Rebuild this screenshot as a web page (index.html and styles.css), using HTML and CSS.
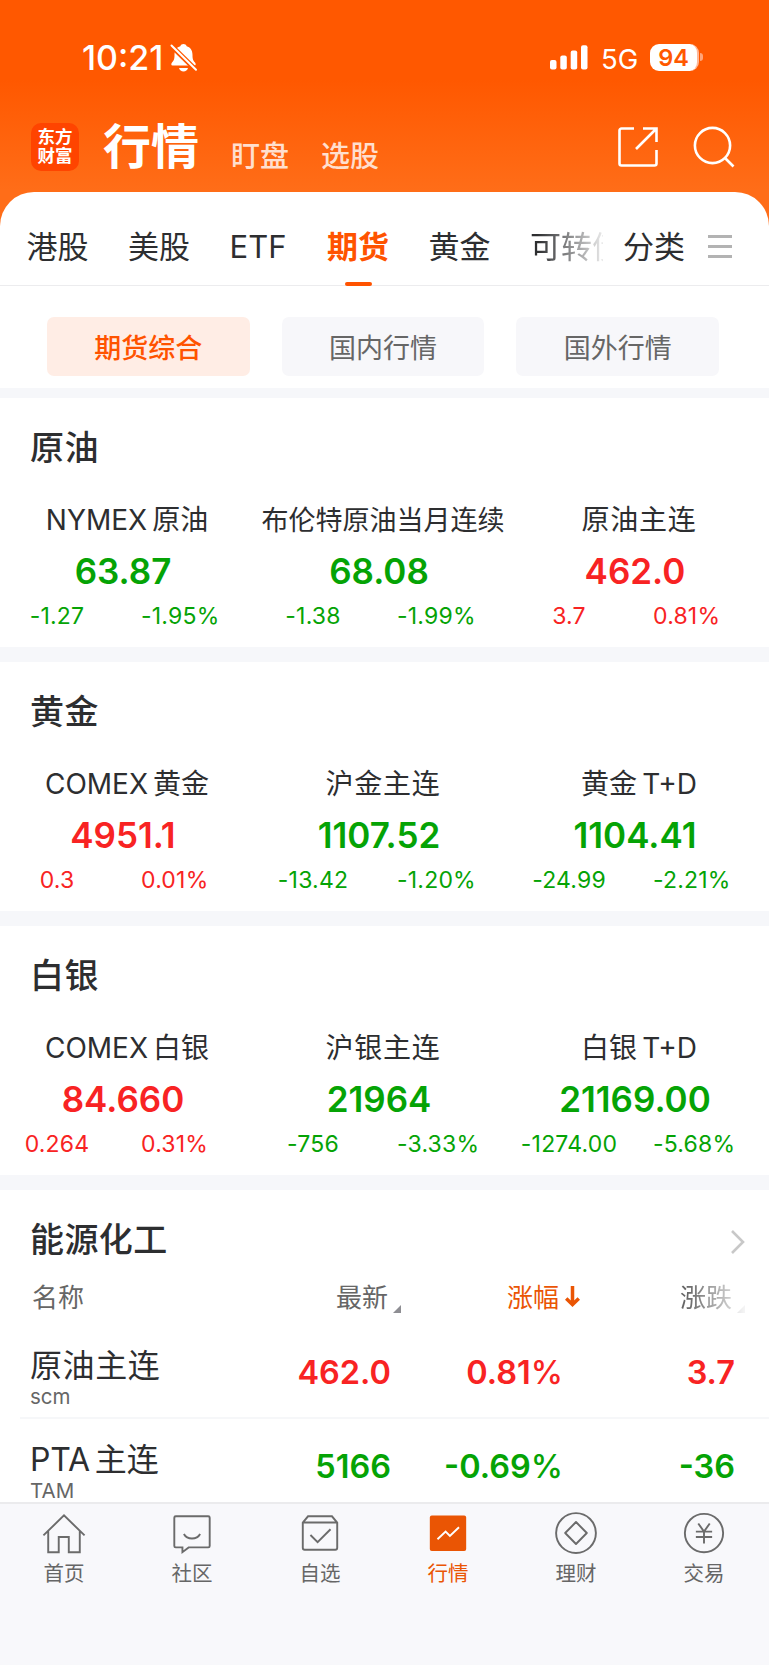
FILE: index.html
```html
<!DOCTYPE html>
<html lang="zh-CN">

<head>
  <meta charset="utf-8" />
  <meta name="viewport" content="width=device-width, initial-scale=1.0" />
  <title>行情</title>
  <link rel="stylesheet" href="styles.css">
</head>

<body>
  <header class="header">
    <div class="status-bar">
      <span class="time">10:21</span>
      <svg class="bell" width="28" height="30" viewBox="0 0 28 30">
        <path fill="#fff" d="M2.500 22.500C1 22.500 1 20.500 2 19.500C4 17.500 4.500 16 4.500 12C4.500 7 7 4.300 10.300 3.300C10.800 1.800 12 1 13.500 1S16.200 1.800 16.700 3.300C20 4.300 22.500 7 22.500 12C22.500 16 23 17.500 25 19.500C26 20.500 26 22.500 24.500 22.500Z" />
        <path fill="#fff" d="M9 25h9c-.6 2.200-2.300 3.600-4.500 3.600S9.600 27.200 9 25Z" />
        <path stroke="#ff5800" stroke-width="5" d="M0 1.500L27 28" />
        <path stroke="#fff" stroke-width="2" stroke-linecap="round" d="M1.500 2.500L26 26.800" />
      </svg>
      <svg class="signal" width="38" height="25" viewBox="0 0 38 25" fill="#fff">
        <rect x="0" y="15" width="6.500" height="9.500" rx="2" />
        <rect x="10.300" y="10.500" width="6.500" height="14" rx="2" />
        <rect x="20.700" y="5.500" width="6.500" height="19" rx="2" />
        <rect x="31" y="0.300" width="6.500" height="24.200" rx="2" />
      </svg>
      <span class="network">5G</span>
      <span class="battery">94</span>
      <span class="battery-cap"></span>
    </div>
    <div class="nav">
      <div class="logo">东方<br>财富</div>
      <h1>行情</h1>
      <span class="nav-link">盯盘</span>
      <span class="nav-link">选股</span>
      <svg class="share" width="42" height="42" viewBox="0 0 42 42" fill="none" stroke="#fff" stroke-width="2.600">
        <path d="M17 2.500H4.500a2 2 0 0 0-2 2V37.500a2 2 0 0 0 2 2H37.500a2 2 0 0 0 2-2V24M26 2.500H39.500V16M39 3L19 23" />
      </svg>
      <svg class="search" width="42" height="42" viewBox="0 0 42 42" fill="none" stroke="#fff" stroke-width="2.600">
        <circle cx="19.500" cy="19.500" r="17.600" />
        <path d="M32 32L40.500 40.500" />
      </svg>
    </div>
  </header>

  <main class="panel">
    <nav class="tabs">
      <span>港股</span>
      <span>美股</span>
      <span class="latin">ETF</span>
      <span class="active">期货</span>
      <span>黄金</span>
      <span class="fade">可转债</span>
      <span class="category">分类</span>
      <i class="menu"></i>
    </nav>

    <div class="pills">
      <span class="pill active">期货综合</span>
      <span class="pill">国内行情</span>
      <span class="pill">国外行情</span>
    </div>

    <section class="group">
      <h2>原油</h2>
      <div class="quotes">
        <div class="quote down">
          <h3 class="mixed">NYMEX<b>原油</b></h3>
          <strong>63.87</strong>
          <p><span>-1.27</span><span>-1.95%</span></p>
        </div>
        <div class="quote down">
          <h3 class="long">布伦特原油当月连续</h3>
          <strong>68.08</strong>
          <p><span>-1.38</span><span>-1.99%</span></p>
        </div>
        <div class="quote up">
          <h3>原油主连</h3>
          <strong>462.0</strong>
          <p><span>3.7</span><span>0.81%</span></p>
        </div>
      </div>
    </section>

    <section class="group">
      <h2>黄金</h2>
      <div class="quotes">
        <div class="quote up">
          <h3 class="mixed">COMEX<b>黄金</b></h3>
          <strong>4951.1</strong>
          <p><span>0.3</span><span>0.01%</span></p>
        </div>
        <div class="quote down">
          <h3>沪金主连</h3>
          <strong>1107.52</strong>
          <p><span>-13.42</span><span>-1.20%</span></p>
        </div>
        <div class="quote down">
          <h3 class="mixed">黄金<b>T+D</b></h3>
          <strong>1104.41</strong>
          <p><span>-24.99</span><span>-2.21%</span></p>
        </div>
      </div>
    </section>

    <section class="group">
      <h2>白银</h2>
      <div class="quotes">
        <div class="quote up">
          <h3 class="mixed">COMEX<b>白银</b></h3>
          <strong>84.660</strong>
          <p><span>0.264</span><span>0.31%</span></p>
        </div>
        <div class="quote down">
          <h3>沪银主连</h3>
          <strong>21964</strong>
          <p><span>-756</span><span>-3.33%</span></p>
        </div>
        <div class="quote down">
          <h3 class="mixed">白银<b>T+D</b></h3>
          <strong>21169.00</strong>
          <p><span>-1274.00</span><span>-5.68%</span></p>
        </div>
      </div>
    </section>

    <section class="list">
      <div class="list-title">
        <h2>能源化工</h2>
        <svg width="16" height="26" viewBox="0 0 16 26" fill="none" stroke="#c8c8c8" stroke-width="2.600">
          <path d="M2 2L13 13L2 24" />
        </svg>
      </div>
      <div class="row head">
        <span>名称</span>
        <span>最新<i class="sort"></i></span>
        <span class="sorted">涨幅<svg width="15" height="22" viewBox="0 0 15 22" fill="none" stroke="#ea5504" stroke-width="3.500"><path d="M7.500 0V19M1.200 12.500L7.500 18.500L13.800 12.500" /></svg></span>
        <span class="fade">涨跌<i class="sort"></i></span>
      </div>
      <div class="row up">
        <div class="name">原油主连<small>scm</small></div>
        <span>462.0</span>
        <span>0.81<em>%</em></span>
        <span>3.7</span>
      </div>
      <div class="row down">
        <div class="name"><div class="mixed">PTA<b>主连</b></div><small>TAM</small></div>
        <span>5166</span>
        <span>-0.69<em>%</em></span>
        <span>-36</span>
      </div>
    </section>
  </main>

  <footer class="tab-bar">
    <a>
      <svg width="46" height="46" viewBox="0 0 46 46">
        <path d="M1.500 24.500L23 3.500L44.500 24.500M6.500 20V42H17.500V26.200H28V42H39.500V20" />
      </svg>
      首页
    </a>
    <a>
      <svg width="46" height="46" viewBox="0 0 46 46">
        <path d="M6 4.500H40a1.500 1.500 0 0 1 1.500 1.500V35.500a1.500 1.500 0 0 1-1.500 1.500H19.500L13 42V37H6a1.500 1.500 0 0 1-1.500-1.500V6A1.500 1.500 0 0 1 6 4.500ZM14.500 23C18 29.300 28 29.300 31.500 23" />
      </svg>
      社区
    </a>
    <a>
      <svg width="46" height="46" viewBox="0 0 46 46">
        <path d="M10.500 4.500H35.500L41 11V37.500a2 2 0 0 1-2 2H7a2 2 0 0 1-2-2V11ZM5 11H41M13 24L20.500 31.500L34 18" />
      </svg>
      自选
    </a>
    <a class="active">
      <svg width="46" height="46" viewBox="0 0 46 46">
        <rect x="4" y="3.700" width="38" height="37" rx="2" fill="#ea5504" stroke="none" />
        <path stroke="#fff" d="M12 28.500L20.500 20.500L25 25L34.500 16" />
      </svg>
      行情
    </a>
    <a>
      <svg width="46" height="46" viewBox="0 0 46 46">
        <circle cx="23" cy="22" r="20.800" />
        <path d="M23 10.500L34.300 22L23 33.500L11.700 22Z" stroke-linejoin="round" />
      </svg>
      理财
    </a>
    <a>
      <svg width="46" height="46" viewBox="0 0 46 46">
        <circle cx="23" cy="22" r="20" />
        <path d="M17 12L23 20.500L29 12M14.500 20.500H31.500M14.500 26.200H31.500M23 20.500V33" />
      </svg>
      交易
    </a>
  </footer>
</body>

</html>
```
FILE: styles.css
```css
* {
  box-sizing: border-box;
}

body {
  margin: 0;
  width: 769px;
  height: 1665px;
  overflow: hidden;
  display: flex;
  flex-direction: column;
  background: #fff;
  color: #2d2e30;
  font-family: Inter, 'Noto Sans CJK SC', sans-serif;
  text-autospace: no-autospace;
}

h1,
h2,
h3,
p {
  margin: 0;
}

/* header */
.header {
  height: 232px;
  margin-bottom: -40px;
  flex: none;
  color: #fff;
  background: linear-gradient(#ff5800 80px, #ff6d18 190px);
}

.status-bar {
  height: 114px;
  padding: 0 66px 0 82px;
  display: flex;
  align-items: center;
}

.time {
  width: 88px;
  padding-top: 1px;
  font-size: 34px;
  font-weight: 500;
  letter-spacing: 0;
}

.bell {
  margin-top: 2px;
}

.signal {
  margin-left: auto;
  margin-right: 13px;
}

.network {
  width: 49px;
  margin-top: 3px;
  font-size: 27.5px;
}

.battery {
  width: 49px;
  height: 27px;
  border-radius: 9px;
  border-right: 2px solid #ffb899;
  background: #fff;
  color: #ff5800;
  font-size: 23.5px;
  font-weight: 600;
  line-height: 27px;
  text-align: center;
}

.battery-cap {
  width: 3px;
  height: 8px;
  margin-left: 1px;
  border-radius: 0 4px 4px 0;
  background: #ffa57a;
}

.nav {
  height: 66px;
  padding: 0 34px 0 31px;
  display: flex;
  align-items: center;
}

.logo {
  width: 48px;
  height: 48px;
  border-radius: 10px;
  background: #ff4400;
  font-size: 17.5px;
  font-weight: 700;
  line-height: 19px;
  padding-top: 4px;
  text-align: center;
}

.nav h1 {
  width: 128px;
  margin-left: 24px;
  font-size: 48px;
  font-weight: 700;
  line-height: 66px;
}

.nav-link {
  width: 90px;
  padding-top: 20px;
  font-size: 29px;
  font-weight: 500;
  line-height: 40px;
  color: #ffdfce;
}

.share {
  margin-left: auto;
  margin-right: 34px;
}

/* panel */
.panel {
  flex: 1;
  min-height: 0;
  overflow: hidden;
  border-radius: 34px 34px 0 0;
  background: #fff;
}

.tabs {
  height: 94px;
  padding: 16px 34px 0 26.5px;
  display: flex;
  align-items: center;
  border-bottom: 1px solid #ececee;
  font-size: 31px;
  line-height: 78px;
}

.tabs span {
  width: 62px;
  height: 78px;
  margin-right: 39.5px;
  white-space: nowrap;
}

.tabs .latin {
  width: 58px;
  font-size: 31px;
}

.tabs .active {
  color: #ff5300;
  font-weight: 700;
  display: flex;
  flex-direction: column;
  align-items: center;
}

.tabs .active::after {
  content: '';
  width: 27px;
  height: 4px;
  margin-top: -4px;
  flex: none;
  border-radius: 2px;
  background: #ff5300;
}

.tabs .fade {
  width: 73px;
  margin-right: 20px;
  overflow: hidden;
  -webkit-mask-image: linear-gradient(90deg, #000 10%, transparent 110%);
  mask-image: linear-gradient(90deg, #000 10%, transparent 110%);
}

.tabs .category {
  margin-right: 23px;
}

.menu {
  width: 24px;
  height: 23px;
  border: solid #b3b3b3;
  border-width: 3px 0;
  background: linear-gradient(#b3b3b3, #b3b3b3) center / 24px 3px no-repeat;
}

.pills {
  height: 112px;
  padding: 31px 50px 12px 47px;
  display: flex;
  gap: 32px;
  border-bottom: 10px solid #f6f7fa;
}

.pill {
  flex: 1;
  height: 59px;
  border-radius: 7px;
  background: #f7f7fa;
  color: #666;
  font-size: 27px;
  line-height: 63px;
  text-align: center;
}

.pill.active {
  background: #ffede5;
  color: #ff5300;
  font-weight: 500;
}

/* quotes */
.group {
  height: 264px;
  padding-top: 25px;
  border-bottom: 15px solid #f6f7fa;
}

h2 {
  padding-left: 30px;
  font-size: 34px;
  font-weight: 500;
  line-height: 50px;
  letter-spacing: 0.4px;
}

.quotes {
  display: grid;
  grid-template-columns: repeat(3, 256px);
  margin-top: 22px;
}

.quote {
  height: 140px;
}

.quote h3 {
  padding-right: 2px;
  color: #2d2e30;
  font-size: 28px;
  font-weight: 400;
  line-height: 51px;
  letter-spacing: 0.8px;
  text-align: center;
  white-space: nowrap;
}

.quote h3.mixed {
  letter-spacing: 0;
}

.quote h3.long {
  font-size: 27px;
  letter-spacing: 0;
}

b {
  font-weight: 400;
  margin-left: 5px;
}

.quote strong {
  display: block;
  margin-top: -1px;
  padding-right: 10px;
  font-size: 35px;
  font-weight: 600;
  line-height: 52px;
  text-align: center;
}

.quote p {
  display: grid;
  grid-template-columns: 114px auto;
  column-gap: 27px;
  font-size: 23px;
  line-height: 38px;
  letter-spacing: 0.2px;
}

.quote p span:first-child {
  display: flex;
  justify-content: center;
}

.up {
  color: #f82323;
}

.down {
  color: #05a305;
}

/* list */
.list {
  padding-top: 25px;
}

.list-title {
  display: flex;
  align-items: center;
  justify-content: space-between;
  padding-right: 23px;
}

.list-title svg {
  margin-top: 3px;
}

.row {
  height: 94px;
  margin-left: 20px;
  padding-left: 10px;
  display: grid;
  grid-template-columns: 221px 140px 172px 172px;
  border-bottom: 2px solid #f6f7f9;
  font-size: 32.5px;
  font-weight: 600;
  line-height: 95px;
  text-align: right;
  white-space: nowrap;
}

.row em {
  font-style: normal;
  font-weight: 500;
}

.row .name {
  display: flex;
  flex-direction: column;
  padding-top: 18px;
  color: #2d2e30;
  font-size: 32px;
  font-weight: 400;
  line-height: 46px;
  letter-spacing: 0.6px;
  text-align: left;
}

.name .mixed {
  font-size: 32px;
  letter-spacing: -0.2px;
}

.name small {
  margin-top: -4px;
  color: #666;
  font-size: 20.5px;
  line-height: 24px;
  letter-spacing: 0;
}

.row.head {
  height: 60px;
  border: 0;
  color: #666;
  font-size: 26px;
  font-weight: 400;
  line-height: 66px;
}

.head span:first-child {
  padding-left: 2px;
  text-align: left;
}

.head .sorted {
  color: #ea5504;
  margin-right: -17px;
}

.sorted svg {
  margin-left: 6px;
  vertical-align: -1px;
}

.head span:nth-child(2),
.head .fade {
  margin-right: -10px;
}

.head .fade {
  -webkit-mask-image: linear-gradient(90deg, #000 68%, transparent 103%);
  mask-image: linear-gradient(90deg, #000 68%, transparent 103%);
}

.sort {
  display: inline-block;
  margin-left: 5px;
  border: 4px solid #8e8e93;
  border-top-color: transparent;
  border-left-color: transparent;
  vertical-align: -6px;
}

/* tab bar */
.tab-bar {
  height: 163px;
  flex: none;
  padding-top: 8px;
  display: grid;
  grid-template-columns: repeat(6, 128px);
  border-top: 2px solid #ebebed;
  background: #f8f8fb;
}

.tab-bar a {
  height: 80px;
  display: flex;
  flex-direction: column;
  align-items: center;
  color: #666;
  font-size: 20.500px;
  line-height: 36px;
}

.tab-bar .active {
  color: #ea5504;
}

.tab-bar svg {
  fill: none;
  stroke: #6b6b6b;
  stroke-width: 2;
}
```
